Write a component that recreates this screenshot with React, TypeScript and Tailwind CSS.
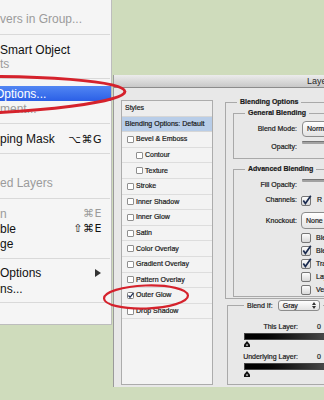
import React from "react";

type MenuRow =
  | { sp: number }
  | { sep: number }
  | { t: string; h: number; d?: boolean; hl?: boolean; sc?: string; arrow?: boolean; off?: boolean };

const menuRows: MenuRow[] = [
  { sp: 11 },
  { t: "vers in Group...", d: true, h: 15 },
  { sep: 16 },
  { t: "Smart Object", h: 15 },
  { t: "ts", d: true, h: 14 },
  { sep: 15 },
  { t: "Options...", hl: true, h: 15, off: true },
  { t: "ment...", d: true, h: 15 },
  { sep: 15 },
  { t: "ping Mask", sc: "⌥⌘G", h: 16 },
  { sep: 13 },
  { t: "", h: 15 },
  { t: "ed Layers", d: true, h: 16 },
  { sep: 15 },
  { t: "n", sc: "⌘E", d: true, h: 15 },
  { t: "ble", sc: "⇧⌘E", h: 15 },
  { t: "ge", h: 15 },
  { sep: 14 },
  { t: "Options", arrow: true, h: 16 },
  { t: "ns...", h: 16 },
  { sep: 10 },
];

function Menu() {
  return (
    <div className="absolute left-0 top-0 w-[112px] h-[325px] bg-[#f5f5f5] border-r border-b border-[#bdbdbd] flex flex-col overflow-hidden">
      {menuRows.map((r, i) => {
        if ("sp" in r) return <div key={i} style={{ height: r.sp }} className="shrink-0" />;
        if ("sep" in r)
          return (
            <div key={i} style={{ height: r.sep }} className="shrink-0 flex items-center pr-[1px]">
              <div className="h-px w-full bg-[#d9d9d9]" />
            </div>
          );
        const color = r.hl ? "text-white" : r.d ? "text-[#9b9b9b]" : "text-[#111111]";
        return (
          <div
            key={i}
            style={{ height: r.h }}
            className={`shrink-0 flex items-center justify-between pr-[9px] text-[12px] leading-none whitespace-nowrap ${color} ${
              r.hl ? "bg-gradient-to-b from-[#5286f3] to-[#2b5fe6]" : ""
            }`}
          >
            <span className={r.off ? "-ml-[5px]" : ""}>{r.t}</span>
            {r.sc && <span className="font-['DejaVu_Sans',sans-serif] text-[11px] tracking-[0.5px]">{r.sc}</span>}
            {r.arrow && (
              <svg width="6" height="8" viewBox="0 0 6 8" className="mr-[1px]">
                <path d="M0 0 L6 4 L0 8 Z" fill="#333" />
              </svg>
            )}
          </div>
        );
      })}
    </div>
  );
}

function SmallBox({ checked }: { checked?: boolean }) {
  if (checked)
    return (
      <svg width="7" height="7" viewBox="0 0 7 7" className="shrink-0">
        <rect x="0.5" y="0.5" width="6" height="6" rx="1" fill="#fff" stroke="#7d7d7d" />
        <path d="M1.5 3.5 L3 5.3 L6.5 0.8" stroke="#1d2d52" strokeWidth="1.3" fill="none" />
      </svg>
    );
  return <div className="w-[7px] h-[7px] shrink-0 bg-white border border-[#8f8f8f] rounded-[1px]" />;
}

const styleItems: { label: string; sub?: boolean; checked?: boolean }[] = [
  { label: "Bevel & Emboss" },
  { label: "Contour", sub: true },
  { label: "Texture", sub: true },
  { label: "Stroke" },
  { label: "Inner Shadow" },
  { label: "Inner Glow" },
  { label: "Satin" },
  { label: "Color Overlay" },
  { label: "Gradient Overlay" },
  { label: "Pattern Overlay" },
  { label: "Outer Glow", checked: true },
  { label: "Drop Shadow" },
];

function StylesPanel() {
  return (
    <div className="w-[92px] h-full shrink-0 border border-[#acacac] bg-[#f3f3f3] flex flex-col">
      <div className="h-[15.6px] shrink-0 flex items-center pl-[3px] border-b border-[#d6d6d6] bg-[#ededed]">Styles</div>
      <div className="h-[15.6px] shrink-0 flex items-center pl-[3px] border-b border-[#d6d6d6] bg-[#b8cde8] whitespace-nowrap">
        Blending Options: Default
      </div>
      {styleItems.map((s) => (
        <div
          key={s.label}
          className={`h-[15.6px] shrink-0 flex items-center gap-[2px] border-b border-[#dddddd] whitespace-nowrap ${
            s.sub ? "pl-[14px]" : "pl-[5px]"
          }`}
        >
          <SmallBox checked={s.checked} />
          <span>{s.label}</span>
        </div>
      ))}
    </div>
  );
}

function AquaBox({ checked }: { checked?: boolean }) {
  return (
    <svg width="11" height="11" viewBox="0 0 11 11" className="shrink-0">
      <defs>
        <linearGradient id="aq" x1="0" y1="0" x2="0" y2="1">
          <stop offset="0" stopColor="#ffffff" />
          <stop offset="1" stopColor="#d6d6d6" />
        </linearGradient>
      </defs>
      <rect x="0.5" y="1.5" width="9" height="9" rx="1.5" fill="url(#aq)" stroke="#767676" />
      {checked && <path d="M2.3 5.6 L4.4 8.6 L9.8 0.8" stroke="#1a2b50" strokeWidth="1.7" fill="none" />}
    </svg>
  );
}

function Select({ text, h }: { text: string; h: number }) {
  return (
    <div
      style={{ height: h }}
      className="w-[90px] shrink-0 flex items-center pl-[4px] rounded-[4px] border border-[#8c8c8c] bg-gradient-to-b from-white to-[#e3e3e3]"
    >
      {text}
    </div>
  );
}

function Track() {
  return <div className="mt-[3px] w-[90px] h-[3px] shrink-0 rounded-[1px] bg-[#a2a2a2] border-t border-[#767676]" />;
}

function Marker() {
  return (
    <svg width="6" height="6" viewBox="0 0 6 6" className="ml-[16px] mt-[1px] shrink-0">
      <path d="M3 0 L6 3.5 L6 6 L0 6 L0 3.5 Z" fill="#111" />
      <rect x="2.4" y="3.3" width="1.2" height="1.6" fill="#fff" />
    </svg>
  );
}

function RightPanel() {
  const checks: [string, boolean][] = [
    ["Blend Interior Effects as Group", false],
    ["Blend Clipped Layers as Group", true],
    ["Transparency Shapes Layer", true],
    ["Layer Mask Hides Effects", false],
    ["Vector Mask Hides Effects", false],
  ];
  return (
    <div className="ml-[12px] -mt-[2px] w-[160px] shrink-0 flex flex-col">
      <fieldset className="border border-[#a9a9a9]">
        <legend className="ml-[11px] px-[3px] font-bold leading-[8px]">Blending Options</legend>
        <div className="pt-[3px] pb-[1px] pl-[7px]">
          <fieldset className="border border-[#a9a9a9]">
            <legend className="ml-[11px] px-[3px] font-bold leading-[8px]">General Blending</legend>
            <div className="pt-[4px] pb-[3px] flex flex-col">
              <div className="h-[16px] flex items-center">
                <span className="w-[63px] text-right shrink-0">Blend Mode:</span>
                <div className="ml-[5px]">
                  <Select text="Normal" h={16} />
                </div>
              </div>
              <div className="mt-[1px] h-[17px] flex items-start">
                <span className="w-[63px] text-right shrink-0 pt-[5px]">Opacity:</span>
                <div className="ml-[5px]">
                  <Track />
                </div>
              </div>
            </div>
          </fieldset>
          <fieldset className="mt-[6px] border border-[#a9a9a9]">
            <legend className="ml-[11px] px-[3px] font-bold leading-[8px]">Advanced Blending</legend>
            <div className="pt-[3px] flex flex-col">
              <div className="h-[16px] flex items-start">
                <span className="w-[63px] text-right shrink-0 pt-[5px]">Fill Opacity:</span>
                <div className="ml-[5px]">
                  <Track />
                </div>
              </div>
              <div className="h-[16px] flex items-center">
                <span className="w-[63px] text-right shrink-0">Channels:</span>
                <div className="ml-[4px] flex items-center gap-[5px]">
                  <AquaBox checked />
                  <span>R</span>
                </div>
              </div>
              <div className="mt-[4px] h-[17px] flex items-center">
                <span className="w-[63px] text-right shrink-0">Knockout:</span>
                <div className="ml-[4px]">
                  <Select text="None" h={17} />
                </div>
              </div>
              <div className="mt-[2px] flex flex-col">
                {checks.map(([l, c], i) => (
                  <div key={i} className="h-[13px] flex items-center pl-[67px] gap-[4px] whitespace-nowrap">
                    <AquaBox checked={c} />
                    <span>{l}</span>
                  </div>
                ))}
              </div>
            </div>
          </fieldset>
        </div>
      </fieldset>
      <fieldset className="mt-[1px] ml-[2px] border border-[#a9a9a9]">
        <legend className="ml-[16px] px-[3px] leading-[11px]">
          <div className="flex items-center gap-[5px]">
            <span>Blend If:</span>
            <div className="w-[42px] h-[11px] flex items-center justify-between pl-[4px] pr-[3px] rounded-[3px] border border-[#8c8c8c] bg-gradient-to-b from-white to-[#e3e3e3]">
              <span>Gray</span>
              <svg width="4" height="7" viewBox="0 0 4 7">
                <path d="M0 3 L2 0 L4 3 Z M0 4 L2 7 L4 4 Z" fill="#333" />
              </svg>
            </div>
          </div>
        </legend>
        <div className="flex flex-col pb-[7px]">
          <div className="mt-[12px] h-[8px] flex items-center">
            <span className="w-[70px] text-right shrink-0">This Layer:</span>
            <span className="ml-[19px]">0</span>
          </div>
          <div className="mt-[2px] ml-[16px] w-[200px] h-[7px] bg-gradient-to-r from-black to-white border border-[#444]" />
          <Marker />
          <div className="mt-[6px] h-[8px] flex items-center">
            <span className="w-[70px] text-right shrink-0 whitespace-nowrap">Underlying Layer:</span>
            <span className="ml-[19px]">0</span>
          </div>
          <div className="mt-[2px] ml-[16px] w-[200px] h-[7px] bg-gradient-to-r from-black to-white border border-[#444]" />
          <Marker />
        </div>
      </fieldset>
    </div>
  );
}

export default function App() {
  return (
    <div className="relative w-[324px] h-[400px] overflow-hidden bg-[#cfdcbc] font-['Liberation_Sans',Arial,sans-serif]">
      <div className="pt-[75px] pl-[113px]">
        <div className="w-[280px] h-[312px] bg-[#e8e8e8] border-l border-[#9a9a9a] flex flex-col">
          <div className="h-[13px] shrink-0 bg-gradient-to-b from-[#ececec] to-[#c8c8c8] border-b border-[#8c8c8c] flex items-center pl-[193px] text-[9px] leading-none text-[#2a2a2a]">
            Layer Style
          </div>
          <div className="flex-1 min-h-0 flex pl-[7px] pt-[12px] pb-[2px] text-[7px] leading-[8px] text-[#1a1a1a] [-webkit-text-stroke:0.2px_#1a1a1a]">
            <StylesPanel />
            <RightPanel />
          </div>
        </div>
      </div>
      <Menu />
      <svg className="absolute inset-0 pointer-events-none" width="324" height="400" viewBox="0 0 324 400">
        <ellipse cx="-60" cy="96" rx="185" ry="19" fill="none" stroke="#d5222c" strokeWidth="3" transform="rotate(-1.4 -60 96)" />
        <ellipse cx="146" cy="297" rx="42" ry="11.5" fill="none" stroke="#d5222c" strokeWidth="2.2" transform="rotate(-2 146 297)" />
      </svg>
    </div>
  );
}
